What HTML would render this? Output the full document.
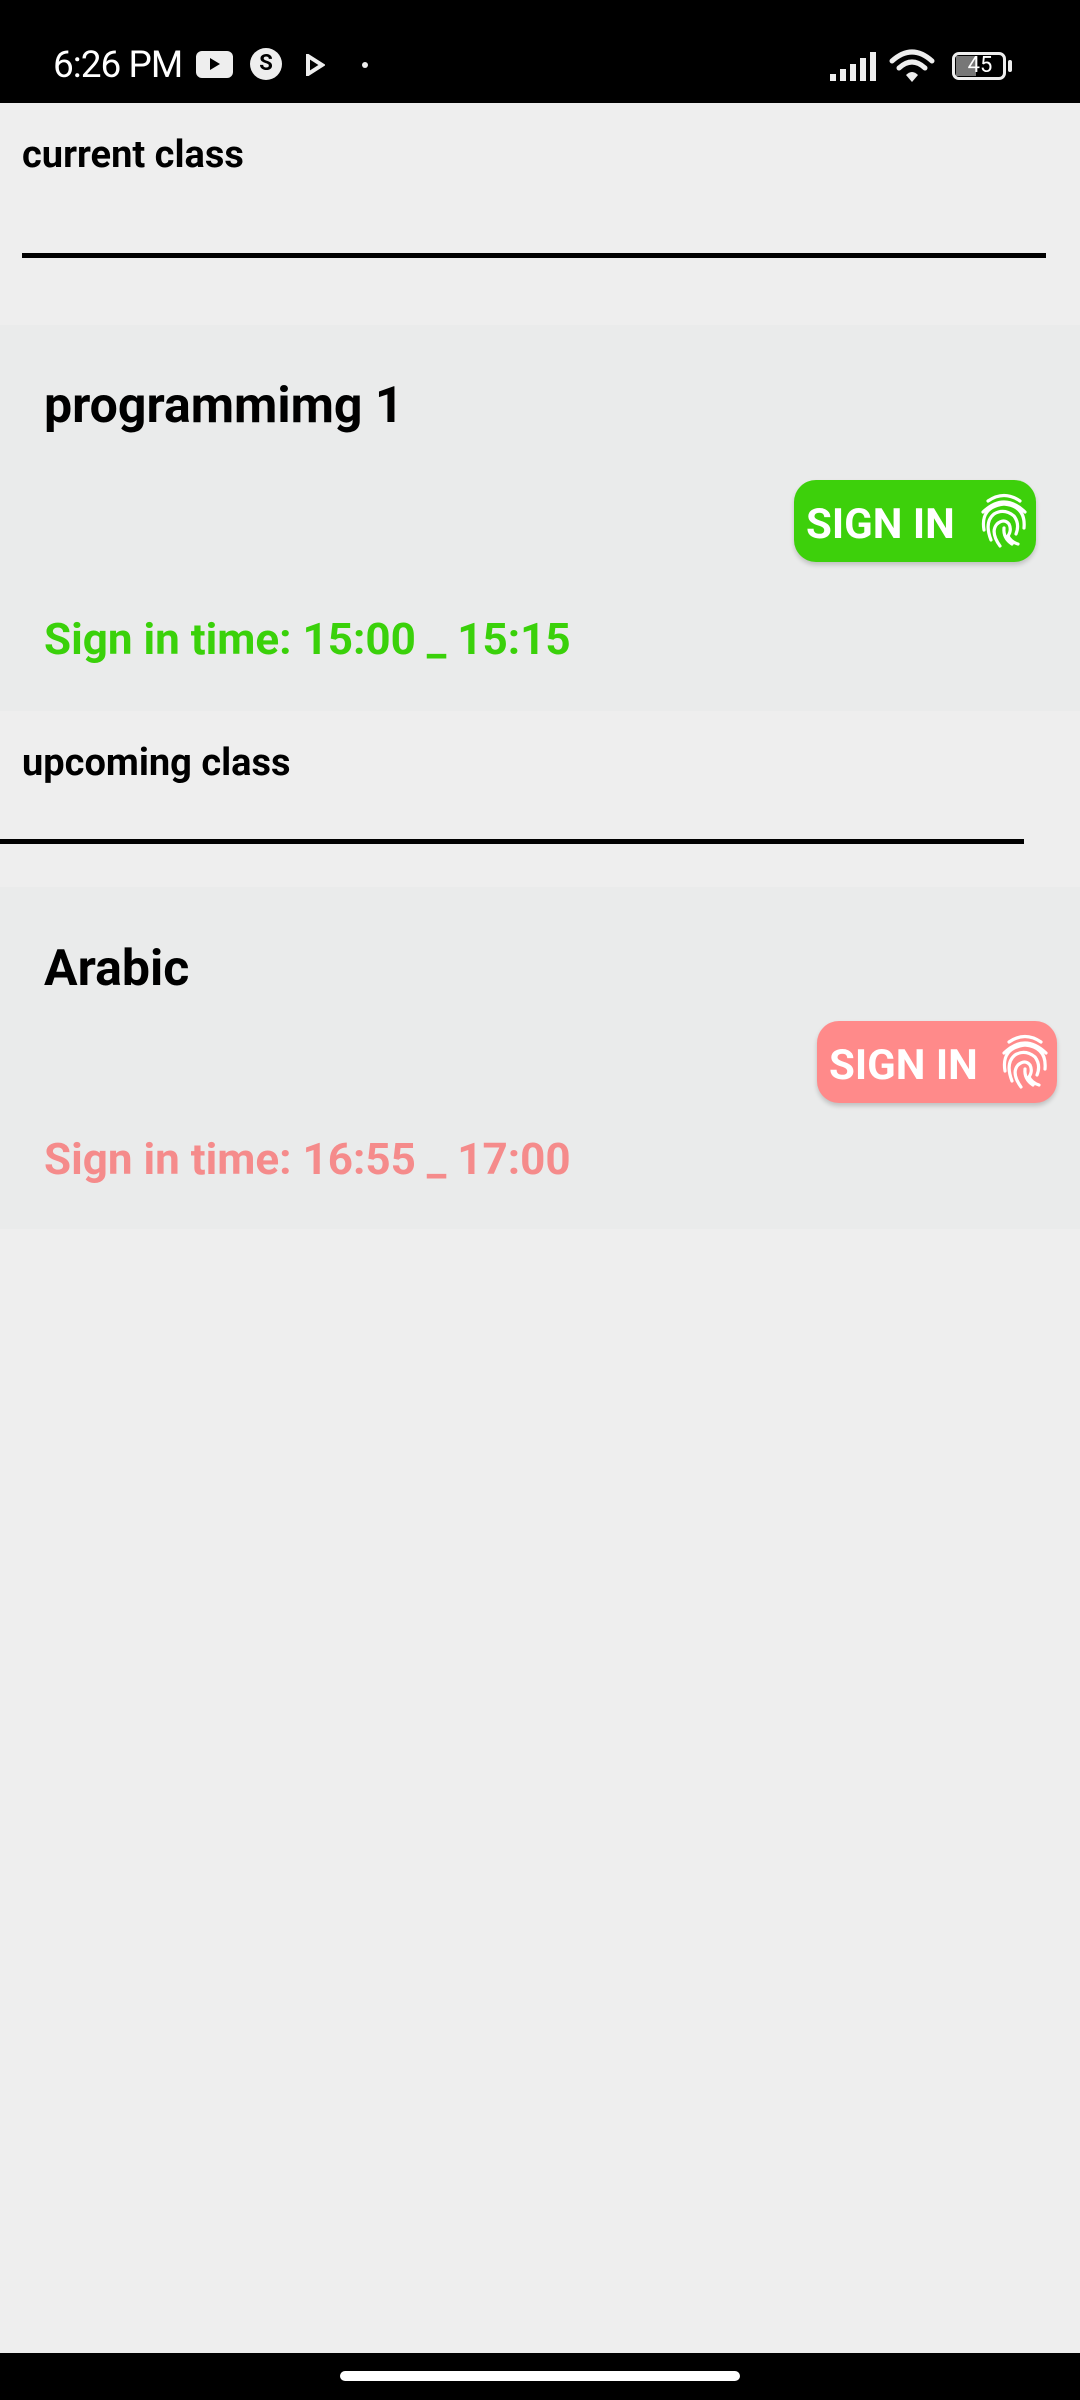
<!DOCTYPE html>
<html><head><meta charset="utf-8"><style>
*{margin:0;padding:0;box-sizing:border-box}
body{width:1080px;height:2400px;background:#eeeeee;position:relative;overflow:hidden;font-family:"Roboto","Liberation Sans",sans-serif}
.abs{position:absolute}
.sb{left:0;top:0;width:1080px;height:103px;background:#000}
.t{white-space:nowrap;font-weight:bold}
.card{left:0;width:1080px;background:#eaebeb}
.btn{border-radius:22px;box-shadow:0 3px 5px rgba(0,0,0,0.18)}
.btn span{position:absolute;left:12px;color:#fff;font-size:42px;font-weight:bold}
</style></head><body>
<div class="abs sb">
  <div class="abs" style="left:53px;top:44px;color:#fff;font-size:37px;letter-spacing:-1px">6:26 PM</div>
  <div class="abs" style="left:196px;top:51px;width:37px;height:27px;background:#eee;border-radius:6px"></div>
  <svg class="abs" style="left:209px;top:57px" width="12" height="14"><path d="M1 1 L11 7 L1 13Z" fill="#000"/></svg>
  <div class="abs" style="left:250px;top:48px;width:32px;height:32px;background:#eee;border-radius:50%;color:#000;font-size:22px;font-weight:bold;text-align:center;line-height:32px">S</div>
  <svg class="abs" style="left:305px;top:54px" width="20" height="22"><path d="M3 2 L17 11 L3 20Z" fill="none" stroke="#eee" stroke-width="4"/></svg>
  <div class="abs" style="left:362px;top:62px;width:6px;height:6px;border-radius:50%;background:#eee"></div>
  <svg class="abs" style="left:828px;top:50px" width="52" height="32"><g fill="#eee"><rect x="2" y="24" width="6" height="7"/><rect x="12" y="19" width="6" height="12"/><rect x="22" y="14" width="6" height="17"/><rect x="32" y="8" width="6" height="23"/><rect x="42" y="2" width="6" height="29"/></g></svg>
  <svg class="abs" style="left:888px;top:48px" width="50" height="36"><g fill="none" stroke="#eee" stroke-width="5" stroke-linecap="round"><path d="M4 13 Q24 -5 44 13"/><path d="M11 20 Q24 8 37 20"/></g><path d="M18 27 Q24 21 30 27 L24 34Z" fill="#eee"/></svg>
  <div class="abs" style="left:952px;top:52px;width:54px;height:28px;border:3px solid #eee;border-radius:7px"></div>
  <div class="abs" style="left:956px;top:56px;width:20px;height:20px;background:#777"></div>
  <div class="abs" style="left:957px;top:51px;width:46px;color:#fff;font-size:22px;text-align:center;line-height:30px">45</div>
  <div class="abs" style="left:1008px;top:60px;width:4px;height:12px;background:#eee;border-radius:2px"></div>
</div>

<div class="abs t" style="left:22px;top:133px;font-size:38px;color:#000">current class</div>
<div class="abs" style="left:22px;top:253px;width:1024px;height:5px;background:#000"></div>

<div class="abs card" style="top:325px;height:386px"></div>
<div class="abs t" style="left:44px;top:377px;font-size:50px;color:#000">programmimg 1</div>
<div class="abs btn" style="left:794px;top:480px;width:242px;height:82px;background:#3dd00b">
  <span style="top:20px">SIGN IN</span>
  <svg class="abs" style="left:184px;top:12px" width="52" height="58" viewBox="0 0 52 58"><g fill="none" stroke="#fff" stroke-width="3.2" stroke-linecap="round"><path d="M10 9 Q26 -2 42 9"/><path d="M5 20 Q26 0 47 20"/><path d="M6 38 Q2 15 26 12 Q48 14 46 36"/><path d="M13 48 Q6 30 16 22 Q26 16 36 24 Q42 32 38 42"/><path d="M22 54 Q12 40 19 32 Q26 26 31 32 Q34 38 30 44 Q33 50 40 52"/><path d="M26 36 Q25 46 34 52"/></g></svg>
</div>
<div class="abs t" style="left:44px;top:613px;font-size:44px;color:#3ad10a">Sign in time: 15:00 _ 15:15</div>

<div class="abs t" style="left:22px;top:741px;font-size:38px;color:#000">upcoming class</div>
<div class="abs" style="left:0;top:839px;width:1024px;height:5px;background:#000"></div>

<div class="abs card" style="top:887px;height:342px"></div>
<div class="abs t" style="left:44px;top:940px;font-size:50px;color:#000">Arabic</div>
<div class="abs btn" style="left:817px;top:1021px;width:240px;height:82px;background:#ff8a8a">
  <span style="top:20px">SIGN IN</span>
  <svg class="abs" style="left:182px;top:12px" width="52" height="58" viewBox="0 0 52 58"><g fill="none" stroke="#fff" stroke-width="3.2" stroke-linecap="round"><path d="M10 9 Q26 -2 42 9"/><path d="M5 20 Q26 0 47 20"/><path d="M6 38 Q2 15 26 12 Q48 14 46 36"/><path d="M13 48 Q6 30 16 22 Q26 16 36 24 Q42 32 38 42"/><path d="M22 54 Q12 40 19 32 Q26 26 31 32 Q34 38 30 44 Q33 50 40 52"/><path d="M26 36 Q25 46 34 52"/></g></svg>
</div>
<div class="abs t" style="left:44px;top:1133px;font-size:44px;color:#f58b8b">Sign in time: 16:55 _ 17:00</div>

<div class="abs" style="left:0;top:2353px;width:1080px;height:47px;background:#000"></div>
<div class="abs" style="left:340px;top:2371px;width:400px;height:10px;border-radius:5px;background:#fff"></div>
</body></html>
